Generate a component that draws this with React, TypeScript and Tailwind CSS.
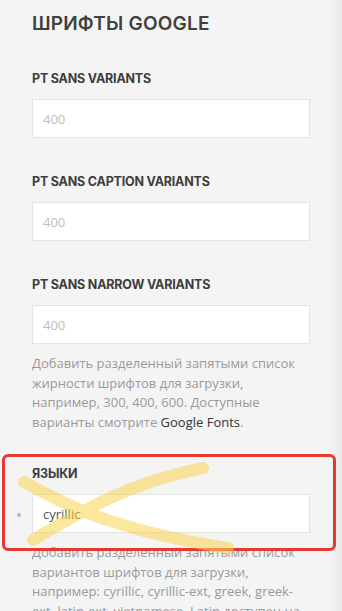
import React from 'react';

const labelCls =
  "text-[12.5px] font-bold uppercase text-[#3d3d3d] leading-4 tracking-[-0.2px] font-['Inter',_'Liberation_Sans',_sans-serif]";
const inputCls =
  "w-[278px] h-[39px] bg-white border border-[#e3e3e3] px-[10px] text-[13px] outline-none font-['Open_Sans',_'Liberation_Sans',_sans-serif]";
const helpCls =
  "mt-[10px] w-[280px] text-[13px] leading-[19.5px] text-[#9a9a9a] font-['Open_Sans',_'Liberation_Sans',_sans-serif]";

const Field = ({ label, value, placeholder }: { label: string; value?: string; placeholder?: string }) => (
  <div>
    <div className={labelCls}>{label}</div>
    <div className="mt-[12px] flex items-center">
      <input
        readOnly
        value={value ?? ''}
        placeholder={placeholder}
        className={`${inputCls} ${value ? 'text-[#555]' : 'placeholder:text-[#bdbdbd]'}`}
      />
    </div>
  </div>
);

const App: React.FC = () => {
  return (
    <div className="w-[342px] h-[611px] overflow-hidden bg-[#f4f4f4] flex">
      <div className="flex-1 pl-[32px] pt-[13px]">
        <h2 className="text-[19px] font-semibold uppercase text-[#404040] leading-[22px] tracking-[0.2px] font-['Inter',_'Liberation_Sans',_sans-serif]">
          Шрифты Google
        </h2>

        <div className="mt-[36px]">
          <Field label="PT Sans Variants" placeholder="400" />
        </div>

        <div className="mt-[36px]">
          <Field label="PT Sans Caption Variants" placeholder="400" />
        </div>

        <div className="mt-[36px]">
          <Field label="PT Sans Narrow Variants" placeholder="400" />
          <p className={helpCls}>
            Добавить разделенный запятыми список жирности шрифтов для загрузки, например, 300, 400, 600. Доступные
            варианты смотрите <span className="text-[#333]">Google Fonts</span>.
          </p>
        </div>

        <div className="mt-[34px] relative">
          <Field label="Языки" value="cyrillic" />
          <p className={helpCls}>
            Добавить разделенный запятыми список вариантов шрифтов для загрузки, например: cyrillic, cyrillic-ext,
            greek, greek-ext, latin-ext, vietnamese. Latin доступен на
          </p>

          {/* маленькая точка слева от поля */}
          <span className="absolute left-[-15px] top-[47px] w-[4px] h-[4px] rounded-full bg-[#b5b5b5]" />

          {/* красная рамка выделения */}
          <div className="absolute left-[-30px] top-[-12px] w-[334px] h-[97px] border-[3px] border-[#e53a2f] rounded-[6px] pointer-events-none" />

          {/* жёлтый маркер крест */}
          <svg
            className="absolute left-[-32px] top-[-466px] pointer-events-none"
            width="342"
            height="611"
            viewBox="0 0 342 611"
          >
            <g fill="none" stroke="#f8d650" strokeWidth="12" strokeLinecap="round" opacity="0.55">
              <path d="M24 482 C 60 502, 110 530, 228 548" />
              <path d="M33 540 C 80 512, 130 482, 203 468" />
            </g>
          </svg>
        </div>
      </div>
      <div className="w-[10px] h-full bg-gradient-to-r from-[#f1f1f1] to-[#e9e9e9]" />
    </div>
  );
};

export default App;
